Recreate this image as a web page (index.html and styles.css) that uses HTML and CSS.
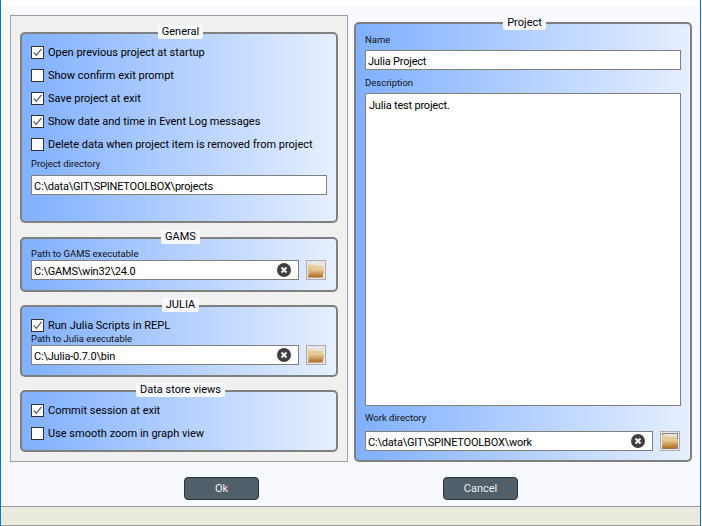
FILE: index.html
```html
<!DOCTYPE html>
<html>
<head>
  <meta charset="UTF-8">
  <title>Settings</title>
  <link rel="stylesheet" href="styles.css">
</head>
<body>
  <svg class="defs" width="0" height="0">
    <defs>
      <linearGradient id="folder-back" x1="0" y1="0" x2="0" y2="1">
        <stop offset="0" stop-color="#eed9ae"/>
        <stop offset="1" stop-color="#c99d5c"/>
      </linearGradient>
      <linearGradient id="folder-front" x1="0" y1="0" x2="0" y2="1">
        <stop offset="0" stop-color="#f2d49e"/>
        <stop offset="1" stop-color="#a9691f"/>
      </linearGradient>
      <symbol id="folder" viewBox="0 0 18 18">
        <path d="M1 3h5.500L8 4.500h7.500V8H4L1 16.500z" fill="url(#folder-back)"/>
        <path d="M1 16.500L3.500 7.500H17.500L15.500 16.500z" fill="url(#folder-front)"/>
      </symbol>
      <symbol id="clear" viewBox="0 0 14 14">
        <circle cx="7" cy="7" r="7" fill="#3f3f3f"/>
        <path d="M4.500 4.500l5 5M9.500 4.500l-5 5" stroke="#f4f4f4" stroke-width="2"/>
      </symbol>
      <symbol id="tick" viewBox="0 0 11 11">
        <path d="M1.800 5.500l2.500 2.800L9.500 1.800" fill="none" stroke="#5a5a5a" stroke-width="1.200"/>
      </symbol>
    </defs>
  </svg>

  <div id="window">
    <div id="top-strip"></div>
    <div id="content">
      <div id="settings">
        <div class="group" id="general">
          <div class="group-title">General</div>
          <div class="check-row"><span class="check"><svg><use href="#tick"/></svg></span>Open previous project at startup</div>
          <div class="check-row"><span class="check"></span>Show confirm exit prompt</div>
          <div class="check-row"><span class="check"><svg><use href="#tick"/></svg></span>Save project at exit</div>
          <div class="check-row"><span class="check"><svg><use href="#tick"/></svg></span>Show date and time in Event Log messages</div>
          <div class="check-row"><span class="check"></span>Delete data when project item is removed from project</div>
          <div class="label">Project directory</div>
          <div class="field field-gap">C:\data\GIT\SPINETOOLBOX\projects</div>
        </div>

        <div class="group">
          <div class="group-title">GAMS</div>
          <div class="label">Path to GAMS executable</div>
          <div class="path-row">
            <div class="field">C:\GAMS\win32\24.0<svg class="clear"><use href="#clear"/></svg></div>
            <button class="folder-btn"><svg><use href="#folder"/></svg></button>
          </div>
        </div>

        <div class="group" id="julia">
          <div class="group-title">JULIA</div>
          <div class="check-row tight"><span class="check"><svg><use href="#tick"/></svg></span>Run Julia Scripts in REPL</div>
          <div class="label">Path to Julia executable</div>
          <div class="path-row">
            <div class="field">C:\Julia-0.7.0\bin<svg class="clear"><use href="#clear"/></svg></div>
            <button class="folder-btn"><svg><use href="#folder"/></svg></button>
          </div>
        </div>

        <div class="group" id="views">
          <div class="group-title">Data store views</div>
          <div class="check-row"><span class="check"><svg><use href="#tick"/></svg></span>Commit session at exit</div>
          <div class="check-row"><span class="check"></span>Use smooth zoom in graph view</div>
        </div>
      </div>

      <div class="group" id="project">
        <div class="group-title">Project</div>
        <div class="label">Name</div>
        <div class="field">Julia Project</div>
        <div class="label label-desc">Description</div>
        <div class="field" id="description">Julia test project.</div>
        <div class="label label-work">Work directory</div>
        <div class="path-row">
          <div class="field">C:\data\GIT\SPINETOOLBOX\work<svg class="clear"><use href="#clear"/></svg></div>
          <button class="folder-btn"><svg><rect x="1.500" y="1.500" width="15" height="15" class="focus-rect"/><use href="#folder"/></svg></button>
        </div>
      </div>
    </div>

    <div id="buttons">
      <button class="btn">Ok</button>
      <button class="btn">Cancel</button>
    </div>

    <div id="statusbar"></div>
  </div>
</body>
</html>
```

FILE: styles.css
```css
html, body {
  margin: 0;
  padding: 0;
  height: 100%;
  overflow: hidden;
  background-color: #fff;
}

body {
  font-family: Roboto, sans-serif;
  font-size: 11px;
  color: #000;
}

.defs {
  position: absolute;
}

#window {
  box-sizing: border-box;
  width: 701px;
  height: 526px;
  display: flex;
  flex-direction: column;
  background-color: #f8f9ff;
  border-left: 1px solid #0078d7;
  border-right: 1px solid #0078d7;
}

#top-strip {
  height: 6px;
  background-color: #fff;
}

#content {
  display: flex;
  padding: 9px 7px 0 9px;
  gap: 6px;
}

#settings {
  box-sizing: border-box;
  width: 338px;
  height: 447px;
  padding: 16px 9px 0 9px;
  display: flex;
  flex-direction: column;
  gap: 13px;
  background-color: #f0f0f0;
  border: 1px solid #a0a0a0;
}

.group {
  display: flex;
  flex-direction: column;
  padding: 7px 9px 10px 9px;
  border: 2px solid #808080;
  border-radius: 5px;
  background: linear-gradient(to right, #80b0ff, #e6efff);
}

#general {
  margin-bottom: 1px;
}

.group-title {
  align-self: center;
  margin: -16px 0 2px 3px;
  height: 14px;
  line-height: 14px;
  padding: 0 4px;
  font-size: 11px;
  background-color: #f8f9ff;
  border-radius: 2px;
}

.check-row {
  display: flex;
  align-items: center;
  gap: 4px;
  height: 23px;
  font-size: 11px;
}

.check-row.tight {
  height: 14px;
  margin: 4px 0 -1px;
}

.check {
  box-sizing: border-box;
  width: 13px;
  height: 13px;
  background-color: #fff;
  border: 1px solid #333;
}

.check svg {
  display: block;
  width: 11px;
  height: 11px;
}

.label {
  height: 14px;
  line-height: 16px;
  font-size: 9.500px;
  color: #111;
}

.field {
  box-sizing: border-box;
  flex: 1;
  height: 20px;
  min-height: 20px;
  display: flex;
  align-items: center;
  justify-content: space-between;
  padding: 2px 7px 0 2px;
  background-color: #fff;
  border: 1px solid #808080;
  font-size: 11px;
  letter-spacing: -0.2px;
}

.field-gap {
  flex: none;
  margin-top: 5px;
  margin-bottom: 16px;
}

.clear {
  width: 14px;
  height: 14px;
  margin-top: -2px;
}

.path-row {
  display: flex;
  gap: 7px;
  padding-right: 1px;
}

.folder-btn {
  box-sizing: border-box;
  width: 20px;
  height: 20px;
  padding: 0;
  background-color: #e6e6e6;
  border: 1px solid #adadad;
}

.folder-btn svg {
  display: block;
  width: 18px;
  height: 18px;
}

.focus-rect {
  fill: none;
  stroke: #222;
  stroke-dasharray: 1 1;
}

#views {
  padding-bottom: 5px;
}

#project {
  box-sizing: border-box;
  width: 338px;
  height: 440px;
  margin-top: 7px;
  padding-top: 8px;
}

#project > .field {
  flex: none;
  margin-top: 4px;
}

#project .label-desc {
  margin-top: 5px;
}

#project .label-work {
  margin-top: 4px;
  margin-bottom: 7px;
}

#description {
  height: 313px;
  align-items: flex-start;
  padding: 5px 3px;
}

#buttons {
  display: flex;
  justify-content: center;
  gap: 184px;
  margin-top: 15px;
  padding-left: 1px;
}

.btn {
  box-sizing: border-box;
  width: 75px;
  height: 23px;
  padding: 0;
  background-color: #505f69;
  border: 1px solid #29353d;
  border-radius: 4px;
  color: #f0f0f0;
  font-family: Roboto, sans-serif;
  font-size: 11px;
}

#statusbar {
  flex: 1;
  margin-top: 6px;
  background-color: #eaeade;
  border-top: 1px solid #9a9a9a;
  border-bottom: 1px solid #9a9a9a;
}
```
